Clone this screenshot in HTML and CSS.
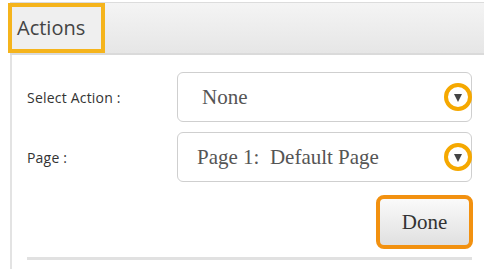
FILE: index.html
```html
<!DOCTYPE html>
<html lang="en">
<head>
    <meta charset="UTF-8">
    <title>Actions</title>
    <link rel="stylesheet" href="styles.css">
</head>
<body>
<div class="panel">
    <div class="panel-head">
        <div class="tab">Actions</div>
    </div>
    <div class="panel-body">
        <div class="row">
            <label class="label">Select Action :</label>
            <div class="select">
                <span class="value">None</span>
                <span class="arrow"><span class="tri"></span></span>
            </div>
        </div>
        <div class="row">
            <label class="label">Page :</label>
            <div class="select">
                <span class="value page">Page 1:&nbsp; Default Page</span>
                <span class="arrow"><span class="tri"></span></span>
            </div>
        </div>
        <div class="actions">
            <button class="done">Done</button>
        </div>
        <div class="rule"></div>
    </div>
</div>
</body>
</html>
```

FILE: styles.css
```css
body {
    margin: 0;
    padding: 0;
    background: #fff;
    font-family: 'Open Sans', 'Noto Sans', sans-serif;
    color: #333;
}

.panel {
    margin: 2px 0 0 10px;
    border-left: 2px solid #e3e3e3;
    height: 267px;
    box-sizing: border-box;
}

.panel-head {
    height: 53px;
    box-sizing: border-box;
    border-top: 1px solid #dcdcdc;
    border-bottom: 2px solid #dadada;
    background: linear-gradient(#f4f4f4, #e6e6e6);
    margin-left: -2px;
    display: flex;
    align-items: center;
}

.tab {
    margin-left: 2px;
    width: 89px;
    height: 42px;
    box-sizing: border-box;
    padding-left: 5px;
    line-height: 42px;
    font-size: 20px;
    color: #444;
    outline: 4px solid #f5b41c;
    background: #efefef;
}

.panel-body {
    padding: 17px 12px 0 15px;
}

.row {
    display: flex;
    align-items: center;
    margin-bottom: 10px;
}

.label {
    width: 150px;
    font-size: 14px;
    letter-spacing: 0.2px;
    color: #333;
}

.select {
    flex: 1;
    height: 50px;
    box-sizing: border-box;
    border: 1px solid #cfcfcf;
    border-radius: 6px;
    display: flex;
    align-items: center;
    padding-left: 24px;
}

.value {
    font-family: 'Liberation Serif', serif;
    font-size: 21px;
    color: #555;
}

.value.page {
    margin-left: -5px;
}

.arrow {
    margin-left: auto;
    margin-right: -1px;
    width: 28px;
    height: 28px;
    box-sizing: border-box;
    border: 4px solid #f5a800;
    border-radius: 50%;
    display: flex;
    align-items: center;
    justify-content: center;
}

.tri {
    width: 0;
    height: 0;
    border-left: 4px solid transparent;
    border-right: 4px solid transparent;
    border-top: 8px solid #444;
    margin-top: 2px;
}

.actions {
    display: flex;
    justify-content: flex-end;
    margin-top: 13px;
    margin-right: -1px;
}

.done {
    width: 97px;
    height: 54px;
    border: 4px solid #f29110;
    border-radius: 8px;
    background: linear-gradient(#fafafa, #e0e0e0);
    font-family: 'Liberation Serif', serif;
    font-size: 21px;
    color: #333;
    padding: 0;
}

.rule {
    margin-top: 8px;
    height: 3px;
    background: #e1e1e1;
}
```
